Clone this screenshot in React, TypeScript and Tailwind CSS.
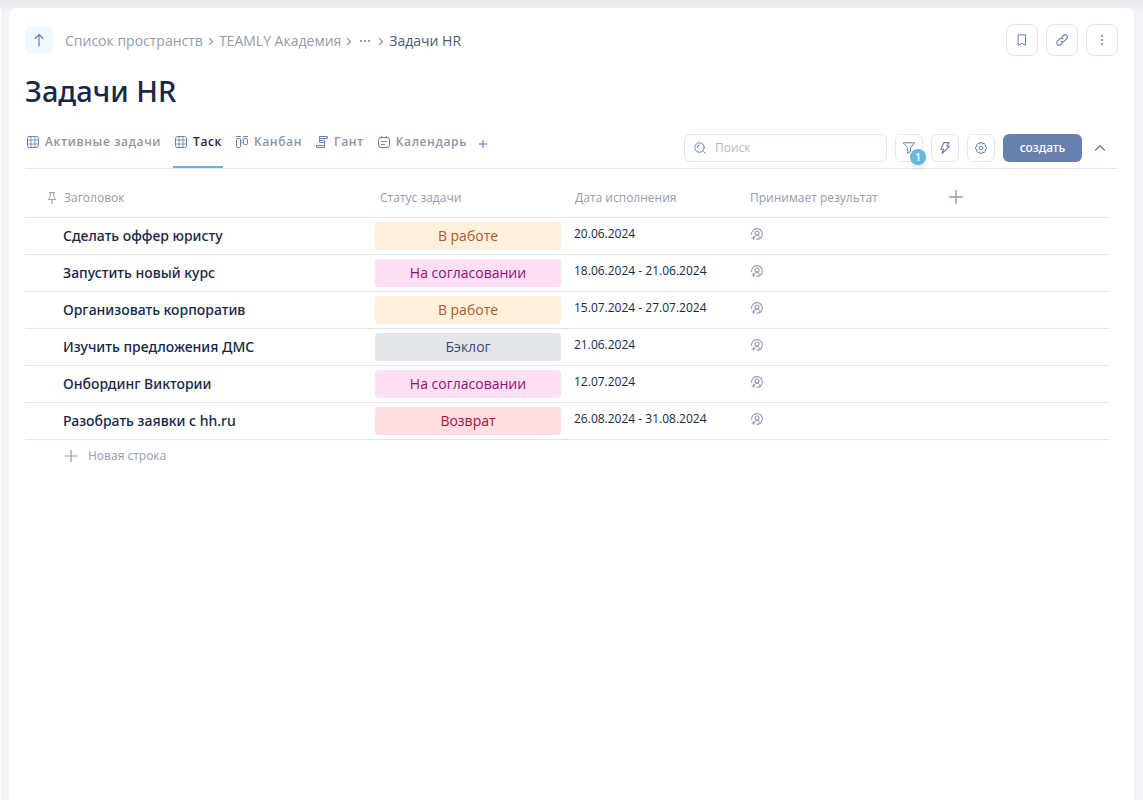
import type { ReactNode } from "react";

type Status = "work" | "approval" | "backlog" | "returned";

const statuses: Record<Status, { label: string; className: string }> = {
  work: { label: "В работе", className: "bg-[#fff0dc] text-[#b0572b]" },
  approval: { label: "На согласовании", className: "bg-[#fddff3] text-[#8f0f77]" },
  backlog: { label: "Бэклог", className: "bg-[#e3e7ec] text-[#404b5c]" },
  returned: { label: "Возврат", className: "bg-[#ffdde0] text-[#a80d3c]" },
};

const tasks: { title: string; status: Status; date: string }[] = [
  { title: "Сделать оффер юристу", status: "work", date: "20.06.2024" },
  { title: "Запустить новый курс", status: "approval", date: "18.06.2024 - 21.06.2024" },
  { title: "Организовать корпоратив", status: "work", date: "15.07.2024 - 27.07.2024" },
  { title: "Изучить предложения ДМС", status: "backlog", date: "21.06.2024" },
  { title: "Онбординг Виктории", status: "approval", date: "12.07.2024" },
  { title: "Разобрать заявки с hh.ru", status: "returned", date: "26.08.2024 - 31.08.2024" },
];

function Icon({ className = "size-3", box = 12, children }: { className?: string; box?: number; children: ReactNode }) {
  return (
    <svg
      aria-hidden="true"
      viewBox={`0 0 ${box} ${box}`}
      className={`shrink-0 ${className}`}
      fill="none"
      stroke="currentColor"
      strokeLinecap="round"
      strokeLinejoin="round"
    >
      {children}
    </svg>
  );
}

const GridIcon = () => (
  <Icon>
    <rect x=".5" y=".5" width="11" height="11" rx="2" />
    <path d="M4 .5v11M8 .5v11M.5 4h11M.5 8h11" strokeWidth=".8" />
  </Icon>
);

const KanbanIcon = () => (
  <Icon>
    <path d="M.5 .5h4M7.500 .5h4" />
    <rect x=".5" y="2.500" width="4" height="9" rx="1.200" />
    <rect x="7.500" y="2.500" width="4" height="6" rx="1.200" />
    <path d="M6 3v5" strokeWidth=".6" />
  </Icon>
);

const GanttIcon = () => (
  <Icon>
    <rect x="3.500" y=".5" width="8" height="2" rx=".3" />
    <path d="M3.500 2.500v4h5v-2h-5M8.500 6.500v3" strokeWidth=".9" />
    <rect x=".5" y="9.500" width="8" height="2" rx=".3" />
  </Icon>
);

const CalendarIcon = () => (
  <Icon>
    <rect x=".5" y="1.500" width="11" height="10" rx="2.500" />
    <path d="M3.500 .5v1.500M8.500 .5v1.500M3.500 5.500h5M3.500 8.500h3" />
  </Icon>
);

const ChevronRight = () => (
  <Icon className="size-2 text-[#8d99ad]" box={8}>
    <path d="M2.500 1.500l3 3-3 3" strokeWidth="1.200" />
  </Icon>
);

const PlusIcon = ({ className }: { className: string }) => (
  <Icon className={className}>
    <path d="M6 .5v11M.5 6h11" strokeWidth="1.200" />
  </Icon>
);

const PersonIcon = () => (
  <Icon>
    <path d="M.6 6.500A5.400 5.400 0 1 1 6 11.400" strokeWidth="1.100" />
    <path d="M3.400 9C3.600 7.800 4.800 7.300 6 7.300s2.800.7 3 2.200" />
    <circle cx="6" cy="5" r="2" strokeWidth="1.100" />
    <path d="M2.500 8.500v3M1 10h3" />
  </Icon>
);

const tabs = [
  { label: "Активные задачи", icon: <GridIcon /> },
  { label: "Таск", icon: <GridIcon />, active: true },
  { label: "Канбан", icon: <KanbanIcon /> },
  { label: "Гант", icon: <GanttIcon /> },
  { label: "Календарь", icon: <CalendarIcon /> },
];

function SquareButton({ label, size = "size-7 rounded-md", children }: { label: string; size?: string; children: ReactNode }) {
  return (
    <button
      type="button"
      aria-label={label}
      className={`relative flex shrink-0 items-center justify-center border border-[#dde7f5] bg-white text-[#6980ae] ${size}`}
    >
      {children}
    </button>
  );
}

export default function App() {
  return (
    <div className="flex min-h-screen bg-[#f3f4f9] bg-linear-to-b from-[#e9eaef] to-[#f3f4f9] to-[12px] pt-2 pr-[9px] font-['Open_Sans','Noto_Sans',sans-serif]">
      <div className="mr-2 w-px shrink-0 bg-white" />
      <main className="min-w-0 flex-1 rounded-t-lg bg-white px-4 pt-4">
        <header className="flex items-center justify-between">
          <div className="flex items-center gap-3">
            <button type="button" aria-label="Наверх" className="flex size-7 items-center justify-center rounded-md bg-[#eff9ff] text-[#6980ae]">
              <Icon className="size-3.5" box={14}>
                <path d="M7 13V1.500M3 5.500l4-4 4 4" strokeWidth="1.200" />
              </Icon>
            </button>
            <nav aria-label="Путь" className="flex items-center gap-1 pt-0.5 text-sm text-[#929cac]">
              <a href="#spaces">Список пространств</a>
              <ChevronRight />
              <a href="#academy">TEAMLY Академия</a>
              <ChevronRight />
              <button type="button" aria-label="Показать весь путь" className="px-0.5">
                <svg viewBox="0 0 12 4" className="h-1 w-3" fill="currentColor" aria-hidden="true">
                  <path d="M1 1h2v2H1zM5 1h2v2H5zM9 1h2v2H9z" />
                </svg>
              </button>
              <ChevronRight />
              <span aria-current="page" className="text-[#4c5a70]">Задачи HR</span>
            </nav>
          </div>
          <div className="flex gap-2">
            <SquareButton label="В закладки" size="size-8 rounded-lg">
              <Icon>
                <path d="M2.500 .8h7v10.400L6 9.500l-3.500 1.700z" />
              </Icon>
            </SquareButton>
            <SquareButton label="Скопировать ссылку" size="size-8 rounded-lg">
              <Icon>
                <path d="M5 7.200a2.200 2.200 0 0 0 3.200 0l2.400-2.400a2.300 2.300 0 0 0-3.300-3.300L6 2.800M7 4.800a2.200 2.200 0 0 0-3.200 0L1.400 7.200a2.300 2.300 0 0 0 3.300 3.300L6 9.200" strokeWidth="1.100" />
              </Icon>
            </SquareButton>
            <SquareButton label="Ещё" size="size-8 rounded-lg">
              <svg viewBox="0 0 2 10" className="h-2.5 w-0.5 text-[#8194be]" fill="currentColor" aria-hidden="true">
                <path d="M0 0h2v2H0zM0 4h2v2H0zM0 8h2v2H0z" />
              </svg>
            </SquareButton>
          </div>
        </header>

        <h1 className="mt-4 font-['Noto_Sans',sans-serif] text-[29px] leading-[38px] font-medium text-[#172847]">Задачи HR</h1>

        <div className="mt-[18px] flex items-start justify-between border-b border-[#dde7f1]">
          <div className="flex items-start">
            <div role="tablist" aria-label="Представления" className="flex gap-[11px]">
              {tabs.map((tab) => (
                <button
                  key={tab.label}
                  type="button"
                  role="tab"
                  aria-selected={!!tab.active}
                  className={`flex h-10 items-start gap-1.5 border-b-2 pt-1 pr-px pl-0.5 text-xs leading-5 font-semibold tracking-wider ${
                    tab.active ? "border-[#66b7db] text-[#172847]" : "border-transparent text-[#8c95a3]"
                  }`}
                >
                  <span className="flex h-5 items-center text-[#6980ae]">{tab.icon}</span>
                  {tab.label}
                </button>
              ))}
            </div>
            <button type="button" aria-label="Добавить представление" className="ml-[11px] flex h-8 items-center text-[#8194be]">
              <Icon className="size-2" box={8}>
                <path d="M4 0v8M0 4h8" strokeWidth="1.300" />
              </Icon>
            </button>
          </div>

          <div className="mt-1.5 flex items-center gap-2">
            <label className="flex h-7 w-[203px] items-center gap-[9px] rounded-md border border-[#dde7f5] px-[9px] text-[#6980ae]">
              <Icon>
                <circle cx="5.500" cy="5.500" r="4.700" />
                <path d="M9.500 9.500l1.800 1.800M3 5.500A2.500 2.500 0 0 1 5.500 3" />
              </Icon>
              <input
                type="search"
                aria-label="Поиск"
                placeholder="Поиск"
                className="w-full min-w-0 bg-transparent text-xs text-[#172847] outline-none placeholder:text-[#b2bac6]"
              />
            </label>
            <SquareButton label="Фильтр, активно: 1">
              <Icon>
                <path d="M.5 .8h11L7.500 6v3.600L4.700 11.300V6z" />
              </Icon>
              <span className="absolute top-3.5 left-3.5 flex size-4 items-center justify-center rounded-full bg-[#66b7db] text-[10px] font-semibold text-white shadow-md">
                1
              </span>
            </SquareButton>
            <SquareButton label="Автоматизация">
              <Icon>
                <path d="M5 .6h5L7.700 4.300h2.600L3 11.500l1.600-4.300H1.800z" strokeWidth="1.100" />
              </Icon>
            </SquareButton>
            <SquareButton label="Настройки">
              <Icon>
                <path d="M5 .6h2l.5 1.300 1.400-.6 1.600 1.600-.6 1.300L11.400 5v2l-1.500.7.6 1.400-1.600 1.600-1.400-.6L7 11.400H5l-.5-1.300-1.400.6-1.600-1.600.6-1.400L.6 7V5l1.500-.8-.6-1.300 1.600-1.600 1.400.6z" />
                <circle cx="6" cy="6" r="1.800" />
              </Icon>
            </SquareButton>
            <button type="button" className="h-7 w-[79px] rounded-md bg-[#6980ae] font-['Noto_Sans',sans-serif] text-xs font-medium text-white">
              создать
            </button>
            <button type="button" aria-label="Свернуть панель" className="mr-2 flex h-7 w-5 items-center justify-center text-[#6980ae]">
              <Icon>
                <path d="M1.500 8.200L6 3.700l4.500 4.500" strokeWidth="1.300" />
              </Icon>
            </button>
          </div>
        </div>

        <div className="pr-2">
          <table className="w-full table-fixed border-collapse text-left">
            <colgroup>
              <col className="w-[346px]" />
              <col className="w-[194px]" />
              <col className="w-[176px]" />
              <col className="w-[200px]" />
              <col />
            </colgroup>
            <thead>
              <tr className="h-12 border-b border-[#dde7f1] text-xs text-[#929cac]">
                <th className="pt-2.5 pl-[21px] font-normal">
                  <span className="flex items-center gap-1.5">
                    <Icon>
                      <path d="M3.500 .6h5M4.200 .6v4L2.500 7.600h7L7.800 4.600v-4M6 7.600v4" />
                    </Icon>
                    Заголовок
                  </span>
                </th>
                <th className="pt-2.5 pl-[9px] font-normal">Статус задачи</th>
                <th className="pt-2.5 pl-2.5 font-normal">Дата исполнения</th>
                <th className="pt-2.5 pl-[9px] font-normal">Принимает результат</th>
                <th className="pt-2 pl-2">
                  <button type="button" aria-label="Добавить столбец" className="flex items-center">
                    <PlusIcon className="size-3.5" />
                  </button>
                </th>
              </tr>
            </thead>
            <tbody>
              {tasks.map((task) => (
                <tr key={task.title} className="h-[37px] border-b border-[#dde7f1] text-[#172847]">
                  <td className="pl-[38px] font-['Noto_Sans',sans-serif] text-sm font-medium">{task.title}</td>
                  <td className="px-1">
                    <span className={`flex h-7 items-center justify-center rounded text-sm ${statuses[task.status].className}`}>
                      {statuses[task.status].label}
                    </span>
                  </td>
                  <td className="pb-1 pl-[9px] text-xs">{task.date}</td>
                  <td className="pb-1 pl-2.5">
                    <button type="button" aria-label="Назначить" className="flex items-center text-[#929cac]">
                      <PersonIcon />
                    </button>
                  </td>
                  <td />
                </tr>
              ))}
            </tbody>
          </table>
          <button type="button" className="flex h-8 items-center gap-[11px] pl-10 text-xs text-[#929cac]">
            <PlusIcon className="size-3" />
            Новая строка
          </button>
        </div>
      </main>
    </div>
  );
}
